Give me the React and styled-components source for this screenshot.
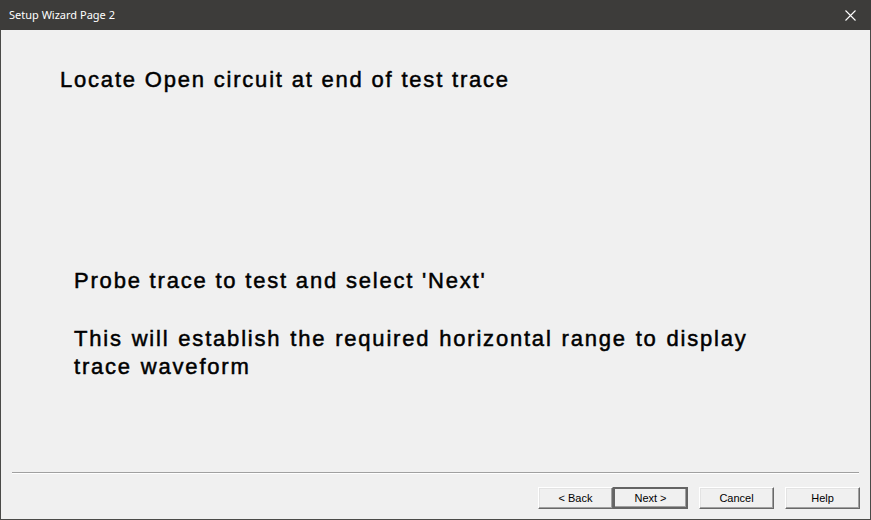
import React from "react";
import styled, { createGlobalStyle } from "styled-components";

const Global = createGlobalStyle`
  html, body { margin: 0; padding: 0; background: #f0f0f0; }
  body { font-family: "Liberation Sans", Arial, sans-serif; }
`;

const Window = styled.div`
  box-sizing: border-box;
  width: 871px;
  height: 520px;
  display: flex;
  flex-direction: column;
  background: #f0f0f0;
  border: 1px solid #4a4a48;
  border-top: none;
`;

const TitleBar = styled.div`
  height: 30px;
  margin: 0 -1px;
  flex: none;
  display: flex;
  align-items: center;
  justify-content: space-between;
  background: #3d3c3a;
  color: #ffffff;
  padding: 0 0 0 9px;
  font-family: "Segoe UI", "Noto Sans", "Open Sans", sans-serif;
  font-size: 11px;
`;

const TitleText = styled.span`
  line-height: 16px;
  padding-bottom: 1px;
`;

const CloseBtn = styled.div`
  width: 46px;
  height: 30px;
  display: flex;
  align-items: center;
  justify-content: center;
  padding-left: 4px;
  box-sizing: border-box;
`;

const Body = styled.div`
  flex: 1;
  display: flex;
  flex-direction: column;
  color: #000;
  font-size: 22px;
  line-height: 28px;
  letter-spacing: 1.8px;
  -webkit-text-stroke: 0.5px #000;
`;

const Heading = styled.div`
  margin: 36px 0 0 59px;
`;

const Instructions = styled.div`
  margin: 173px 0 0 73px;
  display: flex;
  flex-direction: column;
  gap: 30px;
`;

const Para = styled.p`
  margin: 0;
  word-spacing: ${(p) => p.$wordSpacing || 0}px;
`;

const Footer = styled.div`
  flex: none;
  display: flex;
  flex-direction: column;
  padding: 0 10px 10px 11px;
`;

const Separator = styled.div`
  height: 1px;
  margin-right: 1px;
  background: #a0a0a0;
  border-bottom: 1px solid #ffffff;
`;

const ButtonRow = styled.div`
  display: flex;
  justify-content: flex-end;
  margin-top: 13px;
`;

const Group = styled.div`
  display: flex;
  margin-left: ${(p) => p.$gap || 0}px;
`;

const Button = styled.button`
  box-sizing: border-box;
  width: 75px;
  height: 22px;
  padding: 0;
  margin: 0;
  background: #f0f0f0;
  color: #000;
  font-family: "Liberation Sans", Arial, sans-serif;
  font-size: 11px;
  border: 1px solid;
  border-color: #ffffff #696969 #696969 #ffffff;
  box-shadow: ${(p) =>
    p.$default
      ? "0 0 0 1px #646464 inset, inset -1px -1px 0 1px #a0a0a0"
      : "inset -1px -1px 0 #a0a0a0, inset 1px 1px 0 #e3e3e3"};
  ${(p) => p.$default && "border-color: #646464;"}
`;

export default function App() {
  return (
    <>
      <Global />
      <Window>
        <TitleBar>
          <TitleText>Setup Wizard Page 2</TitleText>
          <CloseBtn>
            <svg width="11" height="11" viewBox="0 0 11 11">
              <path d="M0.5 0.5 L10.5 10.5 M10.5 0.5 L0.5 10.5" stroke="#fff" strokeWidth="1.1" />
            </svg>
          </CloseBtn>
        </TitleBar>
        <Body>
          <Heading>Locate Open circuit at end of test trace</Heading>
          <Instructions>
            <Para>Probe trace to test and select 'Next'</Para>
            <Para $wordSpacing={1}>
              This will establish the required horizontal range to display
              <br />
              trace waveform
            </Para>
          </Instructions>
        </Body>
        <Footer>
          <Separator />
          <ButtonRow>
            <Group>
              <Button>&lt; Back</Button>
              <Button $default>Next &gt;</Button>
            </Group>
            <Group $gap={11}>
              <Button>Cancel</Button>
            </Group>
            <Group $gap={11}>
              <Button>Help</Button>
            </Group>
          </ButtonRow>
        </Footer>
      </Window>
    </>
  );
}
